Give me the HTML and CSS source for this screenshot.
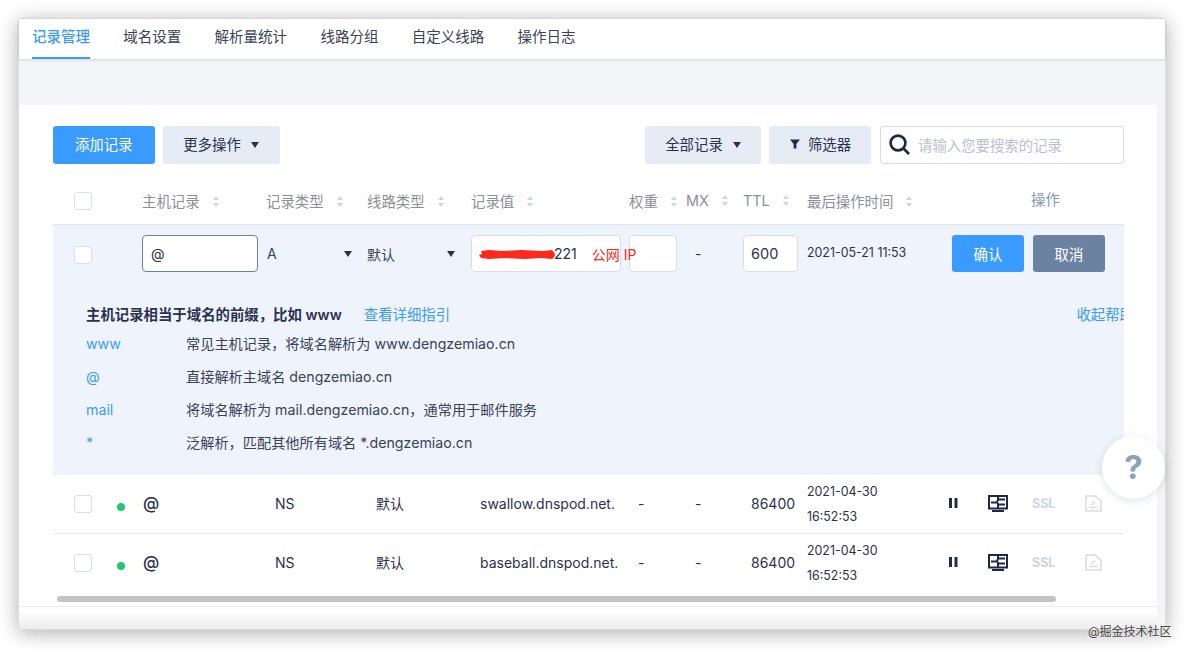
FILE: index.html
```html
<!DOCTYPE html>
<html lang="zh-CN">

<head>
  <meta charset="UTF-8">
  <title>记录管理</title>
  <link rel="stylesheet" href="styles.css">
</head>

<body>
  <div class="window">
    <ul class="tabs">
      <li class="active">记录管理</li>
      <li>域名设置</li>
      <li>解析量统计</li>
      <li>线路分组</li>
      <li>自定义线路</li>
      <li>操作日志</li>
    </ul>

    <div class="card">
      <div class="toolbar">
        <button class="btn primary add">添加记录</button>
        <button class="btn more">更多操作<i class="caret"></i></button>
        <button class="btn all">全部记录<i class="caret"></i></button>
        <button class="btn filter">
          <svg width="12" height="12" viewBox="0 0 12 12"><path d="M1 1.5h10L7.4 6v4.5H4.6V6z" fill="#232c4b"/></svg>
          筛选器
        </button>
        <div class="search">
          <svg width="21" height="21" viewBox="0 0 21 21" fill="none" stroke="#1d2747" stroke-width="2.6"><circle cx="9" cy="9" r="7.4"/><path d="M14.5 14.5l5.5 5.5"/></svg>
          <span>请输入您要搜索的记录</span>
        </div>
      </div>

      <div class="row head">
        <div class="cell-check"><span class="checkbox"></span></div>
        <div class="head-text">主机记录<i class="sort"></i></div>
        <div class="head-text">记录类型<i class="sort"></i></div>
        <div class="head-text">线路类型<i class="sort"></i></div>
        <div class="head-text">记录值<i class="sort"></i></div>
        <div class="head-text">权重<i class="sort"></i></div>
        <div class="head-text">MX<i class="sort"></i></div>
        <div class="head-text">TTL<i class="sort"></i></div>
        <div class="head-text">最后操作时间<i class="sort"></i></div>
        <div class="head-ops">操作</div>
      </div>

      <div class="editing">
        <div class="row edit-row">
          <div class="cell-check"><span class="checkbox"></span></div>
          <div><div class="field host">@</div></div>
          <div class="select">A<i class="caret"></i></div>
          <div class="select line">默认<i class="caret"></i></div>
          <div>
            <div class="field value">
              <svg class="redact" width="77" height="11" viewBox="0 0 77 11"><path d="M2 2l8-1 14 1 18-1 22 1 9-1q3 3 3 5t-3 4l-11-1-16 1-20-1-16 1-8-1-2-3 3-1z" fill="#fb2a1c"/></svg>
              <span class="value-text">221</span>
              <span class="ip-type">公网 IP</span>
            </div>
          </div>
          <div><div class="field weight"></div></div>
          <div class="pad">-</div>
          <div><div class="field ttl">600</div></div>
          <div class="time">2021-05-21 11:53</div>
          <div class="edit-ops">
            <button class="btn primary small">确认</button>
            <button class="btn cancel small">取消</button>
          </div>
        </div>

        <div class="help">
          <div class="help-title">
            <b>主机记录相当于域名的前缀，比如 www</b>
            <a class="guide">查看详细指引</a>
            <a class="collapse">收起帮助</a>
          </div>
          <div class="help-line"><a>www</a><span>常见主机记录，将域名解析为 www.dengzemiao.cn</span></div>
          <div class="help-line"><a>@</a><span>直接解析主域名 dengzemiao.cn</span></div>
          <div class="help-line"><a>mail</a><span>将域名解析为 mail.dengzemiao.cn，通常用于邮件服务</span></div>
          <div class="help-line"><a>*</a><span>泛解析，匹配其他所有域名 *.dengzemiao.cn</span></div>
        </div>
      </div>

      <div class="row record">
        <div class="cell-check"><span class="checkbox"></span><i class="dot"></i></div>
        <div class="at">@</div>
        <div class="pad">NS</div>
        <div class="pad">默认</div>
        <div class="pad">swallow.dnspod.net.</div>
        <div class="pad">-</div>
        <div class="pad">-</div>
        <div class="pad ttl-val">86400</div>
        <div class="time">2021-04-30<br>16:52:53</div>
        <div class="ops">
          <svg width="9" height="10" viewBox="0 0 9 10" fill="#232c4b"><rect width="3" height="10"/><rect x="5.5" width="3" height="10"/></svg>
          <svg class="ops-screen" width="20" height="17" viewBox="0 0 20 17" fill="none" stroke="#1d2747" stroke-width="2"><rect x="1" y="1" width="18" height="12.5"/><path d="M3 7.5h6l1-3h7M10 1v4M10 8v5M11 9.5h6M4 16h12"/></svg>
          <span class="ssl">SSL</span>
          <svg width="17" height="17" viewBox="0 0 17 17" fill="none" stroke="#dcdcdc" stroke-width="1.6"><path d="M1 1h9l6 5v10H1zM4.5 12.5h8M6.5 10l3.5-3.5"/></svg>
        </div>
      </div>

      <div class="row record">
        <div class="cell-check"><span class="checkbox"></span><i class="dot"></i></div>
        <div class="at">@</div>
        <div class="pad">NS</div>
        <div class="pad">默认</div>
        <div class="pad">baseball.dnspod.net.</div>
        <div class="pad">-</div>
        <div class="pad">-</div>
        <div class="pad ttl-val">86400</div>
        <div class="time">2021-04-30<br>16:52:53</div>
        <div class="ops">
          <svg width="9" height="10" viewBox="0 0 9 10" fill="#232c4b"><rect width="3" height="10"/><rect x="5.5" width="3" height="10"/></svg>
          <svg class="ops-screen" width="20" height="17" viewBox="0 0 20 17" fill="none" stroke="#1d2747" stroke-width="2"><rect x="1" y="1" width="18" height="12.5"/><path d="M3 7.5h6l1-3h7M10 1v4M10 8v5M11 9.5h6M4 16h12"/></svg>
          <span class="ssl">SSL</span>
          <svg width="17" height="17" viewBox="0 0 17 17" fill="none" stroke="#dcdcdc" stroke-width="1.6"><path d="M1 1h9l6 5v10H1zM4.5 12.5h8M6.5 10l3.5-3.5"/></svg>
        </div>
      </div>

      <div class="scrollbar"><div class="thumb"></div></div>
      <div class="card-foot"></div>
    </div>

    <div class="help-fab">?</div>
  </div>
  <div class="watermark">@掘金技术社区</div>
</body>

</html>
```

FILE: styles.css
```css
* {
  box-sizing: border-box;
}

html,
body {
  height: 100%;
}

body {
  margin: 0;
  overflow: hidden;
  background-color: #fff;
  color: #2a3150;
  font-family: Inter, "Noto Sans CJK SC", sans-serif;
  font-size: 14px;
}

i {
  font-style: normal;
}

.window {
  position: relative;
  display: flex;
  flex-direction: column;
  width: 1148px;
  height: 612px;
  margin: 18px 0 0 18px;
  border: 1px solid #dcdcdc;
  border-radius: 4px;
  background-color: #f3f6f9;
  box-shadow: 0 3px 20px rgba(0, 0, 0, 0.32);
}

/* tabs */
.tabs {
  display: flex;
  gap: 33.3px;
  height: 40px;
  margin: 0;
  padding: 0 0 0 13px;
  background-color: #fff;
  box-shadow: 0 1px 3px rgba(0, 0, 0, 0.14);
  list-style: none;
  font-size: 14.5px;
  line-height: 35px;
  color: #3a4257;
}

.tabs .active {
  border-bottom: 2px solid #3a9bff;
  height: 40px;
  color: #3a9bff;
  font-weight: 500;
}

/* card */
.card {
  display: flex;
  flex: 1;
  flex-direction: column;
  margin: 46px 8px 0 0;
  padding: 21px 33px 0 34px;
  border-radius: 4px 4px 0 0;
  background-color: #fff;
}

.toolbar {
  display: flex;
  gap: 8px;
  height: 38px;
}

.btn {
  height: 38px;
  padding: 0 0 3px;
  border: 0;
  border-radius: 3px;
  background-color: #e6ecf5;
  color: #2a3150;
  font-family: inherit;
  font-size: 14.4px;
}

.btn.primary {
  background-color: #3a9bff;
  color: #fff;
}

.btn.cancel {
  background-color: #6c82a3;
  color: #fff;
}

.btn.small {
  width: 72px;
  height: 37px;
  padding-bottom: 1px;
}

.add {
  width: 101.5px;
}

.more {
  width: 117px;
  margin-right: auto;
}

.all {
  width: 116px;
}

.filter {
  display: flex;
  gap: 7px;
  align-items: center;
  justify-content: center;
  width: 102px;
  margin-right: 1px;
}

.search {
  display: flex;
  gap: 8px;
  align-items: center;
  width: 244px;
  padding: 0 0 1px 8px;
  border: 1px solid #d5dce8;
  border-radius: 3px;
  color: #b9c1cf;
  font-size: 14.4px;
}

.caret {
  display: inline-block;
  margin-left: 10px;
  border-top: 6px solid #2a3150;
  border-left: 4.5px solid transparent;
  border-right: 4.5px solid transparent;
  vertical-align: 2px;
}

/* table rows */
.row {
  display: grid;
  grid-template-columns: 89px 124px 101px 104px 158px 57px 57px 64px 138px 1fr;
  align-items: center;
}

.cell-check {
  display: flex;
  align-items: center;
  padding-left: 21px;
}

.checkbox {
  width: 18px;
  height: 18px;
  border: 1px solid #d8deea;
  border-radius: 3px;
  background-color: #fff;
}

.head {
  height: 45px;
  margin-top: 16px;
  padding-bottom: 2px;
  border-bottom: 1px solid #e1e5ec;
  color: #8b8f98;
  font-size: 14.4px;
}

.head-text {
  margin-bottom: 1px;
}

.sort {
  position: relative;
  display: inline-block;
  width: 6px;
  height: 11px;
  margin-left: 13px;
}

.sort::before,
.sort::after {
  content: '';
  position: absolute;
  left: 0;
  border-left: 3px solid transparent;
  border-right: 3px solid transparent;
}

.sort::before {
  top: 0;
  border-bottom: 4.5px solid #c9d6ea;
}

.sort::after {
  bottom: 0;
  border-top: 4.5px solid #c9d6ea;
}

.head-ops {
  margin-bottom: 5px;
  padding-left: 86px;
  color: #8497b0;
}

.editing {
  background-color: #eff3fb;
}

.edit-row {
  height: 57px;
  padding-top: 10px;
  align-items: start;
}

.edit-row .checkbox {
  margin-top: 11px;
}

.edit-row .cell-check {
  align-items: flex-start;
}

.field {
  display: flex;
  align-items: center;
  height: 37px;
  border: 1px solid #d8deea;
  border-radius: 4px;
  background-color: #fff;
  padding-left: 8px;
}

.host {
  width: 116px;
  border-color: #6c82a3;
}

.value {
  position: relative;
  width: 150px;
}

/* covers the masked part of the address */
.redact {
  position: absolute;
  top: 13px;
  left: 7px;
}

.value-text {
  margin-left: 74px;
}

.ip-type {
  position: relative;
  z-index: 1;
  margin-left: 15px;
  color: #fb2a1c;
  white-space: nowrap;
}

.weight {
  width: 48px;
}

.ttl {
  width: 55px;
  font-size: 14.5px;
  padding-left: 7px;
}

.select {
  display: flex;
  align-items: center;
  justify-content: space-between;
  width: 86px;
  height: 37px;
  padding-left: 1px;
  color: #3a4257;
}

.select.line {
  width: 88px;
  padding-left: 0;
}

.edit-row .pad {
  line-height: 37px;
}

.edit-ops {
  display: flex;
  gap: 9px;
  padding-left: 7px;
}

.time {
  font-size: 12.4px;
  line-height: 25px;
}

.edit-row .time {
  line-height: 36px;
}

.pad {
  padding-left: 9px;
  white-space: nowrap;
}

.record .pad,
.at {
  margin-bottom: 2px;
}

.ttl-val {
  padding-left: 8px;
}

/* help */
.help {
  height: 193px;
  padding: 22px 0 0 33px;
  overflow: hidden;
}

.help-title {
  display: flex;
  height: 21px;
  line-height: 21px;
  white-space: nowrap;
  font-size: 14.4px;
}

.help-title b {
  font-weight: 600;
}

.help a {
  color: #3a9bff;
}

.guide {
  margin-left: 22px;
}

.collapse {
  margin-left: auto;
  margin-right: -10px;
}

.help-line {
  display: flex;
  height: 33px;
  padding-top: 2px;
  line-height: 33px;
  color: #3a4257;
  font-size: 14.2px;
}

.help-line a {
  width: 100px;
}

/* records */
.record {
  height: 59px;
  border-bottom: 1px solid #e8ebf0;
}

.record + .record {
  border-bottom: 0;
  height: 58px;
}

.dot {
  width: 8px;
  height: 8px;
  margin: 6px 0 0 25px;
  border-radius: 50%;
  background-color: #1fc776;
}

.at {
  padding-left: 1px;
  font-size: 16.5px;
  font-weight: 500;
}

.ops {
  display: flex;
  align-items: center;
  padding: 0 0 2px 4px;
}

.ops-screen {
  margin-left: 30px;
}

.ssl {
  width: 48px;
  padding-left: 24px;
  color: #ccd5e4;
  font-size: 12.5px;
  font-weight: 700;
}

.ops .ssl + svg {
  margin-left: 29px;
}

.scrollbar {
  height: 6px;
  margin: 4px 0 4px 4px;
}

.thumb {
  width: 999px;
  height: 6px;
  border-radius: 3px;
  background-color: #c3c3c3;
}

.card-foot {
  flex: 1;
  margin: 0 -33px 0 -34px;
  background: linear-gradient(#e8ebf0, #e8ebf0 1px, #fff 1px, #fff 20%, #ececec);
}

.help-fab {
  position: absolute;
  top: 417px;
  right: 0;
  width: 63px;
  height: 63px;
  border-radius: 50%;
  background-color: #fff;
  box-shadow: 0 2px 8px rgba(80, 100, 140, 0.18);
  color: #8ea0ba;
  font-size: 33px;
  font-weight: 700;
  line-height: 63px;
  text-align: center;
}

.watermark {
  position: absolute;
  top: 622px;
  left: 1088px;
  color: #444;
  font-size: 12px;
  text-shadow: 0 0 2px #fff;
}
```
